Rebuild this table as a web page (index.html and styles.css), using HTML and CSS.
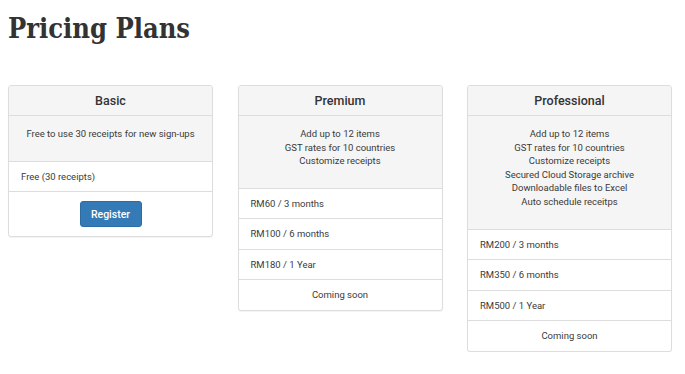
FILE: index.html
```html
<!DOCTYPE html>
<html>
<head>
<meta charset="utf-8">
<link rel="stylesheet" href="styles.css">
</head>
<body>
<h1 class="title">Pricing Plans</h1>
<div class="plans">
  <div class="card">
    <div class="card-head">Basic</div>
    <div class="features">
      <div>Free to use 30 receipts for new sign-ups</div>
    </div>
    <div class="row">Free (30 receipts)</div>
    <div class="row center btn-row"><button class="btn">Register</button></div>
  </div>
  <div class="card">
    <div class="card-head">Premium</div>
    <div class="features">
      <div>Add up to 12 items</div>
      <div>GST rates for 10 countries</div>
      <div>Customize receipts</div>
    </div>
    <div class="row">RM60 / 3 months</div>
    <div class="row">RM100 / 6 months</div>
    <div class="row">RM180 / 1 Year</div>
    <div class="row center">Coming soon</div>
  </div>
  <div class="card">
    <div class="card-head">Professional</div>
    <div class="features">
      <div>Add up to 12 items</div>
      <div>GST rates for 10 countries</div>
      <div>Customize receipts</div>
      <div>Secured Cloud Storage archive</div>
      <div>Downloadable files to Excel</div>
      <div>Auto schedule receitps</div>
    </div>
    <div class="row">RM200 / 3 months</div>
    <div class="row">RM350 / 6 months</div>
    <div class="row">RM500 / 1 Year</div>
    <div class="row center">Coming soon</div>
  </div>
</div>
</body>
</html>
```

FILE: styles.css
```css
html, body {
  margin: 0;
  padding: 0;
  background: #fff;
}
body {
  padding: 0 8px;
  font-family: Roboto, "Liberation Sans", sans-serif;
  color: #333;
}
.title {
  margin: 12px 0 0 0;
  font-family: "DejaVu Serif Condensed", "DejaVu Serif", serif;
  font-weight: bold;
  font-size: 27px;
  line-height: 34px;
  color: #333;
}
.plans {
  display: flex;
  align-items: flex-start;
  gap: 24.5px;
  margin-top: 39px;
}
.card {
  width: 203px;
  border: 1px solid #ddd;
  border-radius: 3px;
  box-shadow: 0 1px 1px rgba(0,0,0,0.05);
  background: #fff;
  overflow: hidden;
}
.card-head {
  height: 29px;
  line-height: 29px;
  text-align: center;
  font-size: 12.5px;
  font-weight: 500;
  background: #f5f5f5;
  border-bottom: 1px solid #ddd;
  color: #333;
}
.features {
  background: #f5f5f5;
  text-align: center;
  font-size: 9.5px;
  line-height: 13.6px;
  padding: 11px 8px 20px;
  border-bottom: 1px solid #ddd;
  color: #3a3a3a;
}
.row {
  height: 29.5px;
  line-height: 29.5px;
  padding: 0 12px;
  font-size: 9.5px;
  border-bottom: 1px solid #ddd;
  color: #3a3a3a;
}
.row:last-child {
  border-bottom: none;
}
.center {
  text-align: center;
}
.btn-row {
  height: 44px;
  display: flex;
  align-items: center;
  justify-content: center;
}
.btn {
  width: 62px;
  height: 26px;
  border: 1px solid #2e6da4;
  border-radius: 3px;
  background: #337ab7;
  color: #fff;
  font-family: Roboto, "Liberation Sans", sans-serif;
  font-size: 10.5px;
  font-weight: 500;
  padding: 0;
}
```
